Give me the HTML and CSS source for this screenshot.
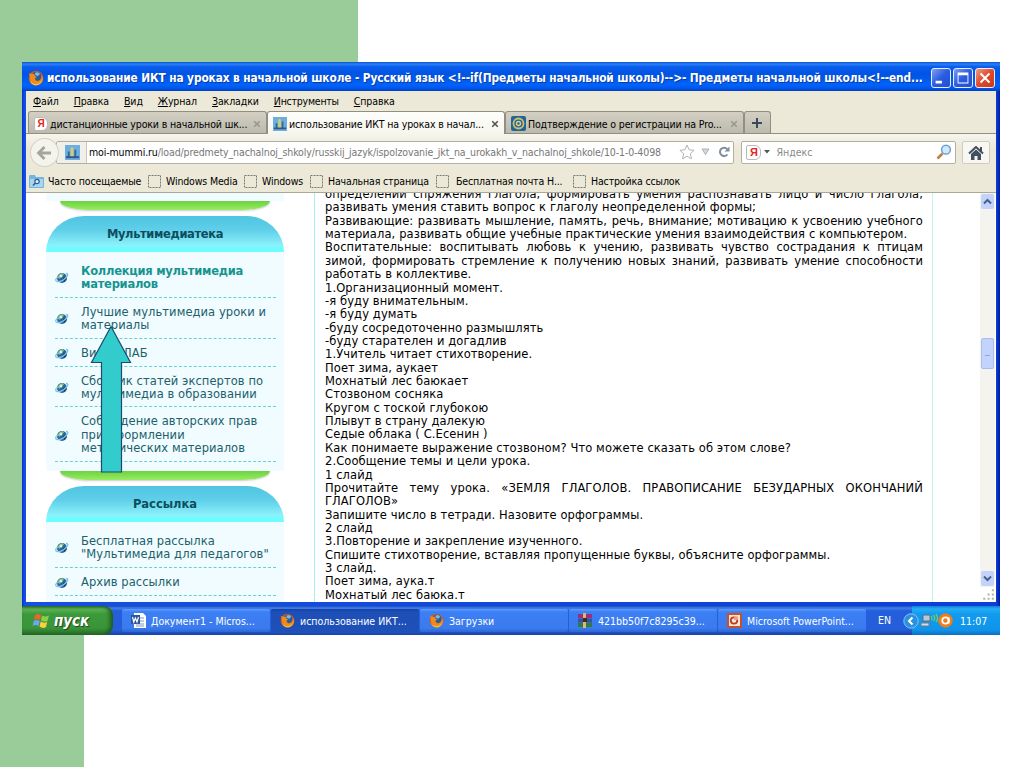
FILE: index.html
```html
<!DOCTYPE html>
<html lang="ru">
  <head>
    <meta charset="utf-8"/>
    <title>Мультимедиатека</title>
    <link rel="stylesheet" href="styles.css">
  </head>

  <body>
    <svg class="symbols" width="0" height="0">
      <symbol id="firefox" viewBox="0 0 16 16">
        <circle cx="8" cy="8" r="7.3" fill="#d9590c"/>
        <circle cx="8.6" cy="6.6" r="4.9" fill="#2b5c9e"/>
        <path d="M7 3q3-2 5 1l-2 2-3-1z" fill="#7db8e2"/>
        <path d="M1 3l2 1 3 0 1 2 2 1-2 1q0 3 3 3 4-1 3.500-6 3 4 0 8-4 3-8 1-4-3-3.500-7z" fill="#f08a1b"/>
        <path d="M1.300 9q2 5 7 5 4-.500 5.500-4-1 5-6 5.500-5-.500-6.500-6.500z" fill="#f8c23a"/>
      </symbol>
      <symbol id="globe" viewBox="0 0 14 14">
        <circle cx="7" cy="7" r="5" fill="#2c62a4"/>
        <path d="M3 5q2-3 5-3l1 2-3 1-1 3-2-1z" fill="#7ec36c"/>
        <path d="M8 7l3-1 .5 2-2.500 3z" fill="#153f4c"/>
        <circle cx="6" cy="5" r="1.500" fill="#d7f0f6"/>
        <path d="M3 6Q-1 9 2 10.500q5 1 10-5 2-3-1-3" fill="none" stroke="#7cc4e4" stroke-width="1.300"/>
      </symbol>
      <symbol id="mummi" viewBox="0 0 16 16">
        <rect width="16" height="16" fill="#6caee0"/>
        <path d="M3 13V7h2v6zM10 13V5h2v8z" fill="#3a6690"/>
        <path d="M6 13V3l2-1 1 2v9z" fill="#d0cf78"/>
        <path d="M1 12h14v2H1z" fill="#33558a"/>
      </symbol>
      <symbol id="cross" viewBox="0 0 8 8">
        <path d="M1.200 1.200l5.600 5.600M6.800 1.200L1.200 6.800" fill="none" stroke="currentColor" stroke-width="1.600"/>
      </symbol>
      <symbol id="blank" viewBox="0 0 14 14">
        <rect x="1.500" y="1.500" width="12" height="12" fill="none" stroke="#77756c" stroke-dasharray="2 1"/>
      </symbol>
    </svg>

    <div class="slide">
      <div class="window">
        <div class="titlebar">
          <svg class="icon16"><use href="#firefox"/></svg>
          <span class="title">использование ИКТ на уроках в начальной школе - Русский язык &lt;!--if(Предметы начальной школы)--&gt;- Предметы начальной школы&lt;!--end...</span>
          <div class="winbuttons">
            <svg class="winbtn blue" viewBox="0 0 20 20"><path d="M4 13h7v3H4z" fill="#fff"/></svg>
            <svg class="winbtn blue" viewBox="0 0 20 20"><path d="M4 4h12v12H4zM5 7h10v8H5z" fill="#fff" fill-rule="evenodd"/></svg>
            <svg class="winbtn red" viewBox="0 0 20 20"><path d="M5 5l10 10M15 5L5 15" stroke="#fff" stroke-width="2.200"/></svg>
          </div>
        </div>

        <div class="menubar">
          <span><u>Ф</u>айл</span>
          <span><u>П</u>равка</span>
          <span><u>В</u>ид</span>
          <span><u>Ж</u>урнал</span>
          <span><u>З</u>акладки</span>
          <span class="tools"><u>И</u>нструменты</span>
          <span><u>С</u>правка</span>
        </div>

        <div class="tabs">
          <div class="tab">
            <span class="yandex">Я</span>
            <span class="label">дистанционные уроки в начальной шк...</span>
            <svg class="close"><use href="#cross"/></svg>
          </div>
          <div class="tab active">
            <svg class="icon14"><use href="#mummi"/></svg>
            <span class="label">использование ИКТ на уроках в начал...</span>
            <svg class="close"><use href="#cross"/></svg>
          </div>
          <div class="tab">
            <svg class="icon15" viewBox="0 0 15 15"><rect width="15" height="15" rx="2" fill="#1f6699"/><circle cx="7.500" cy="7.500" r="5" fill="none" stroke="#d3bd68" stroke-width="1.800"/><circle cx="7.500" cy="7.500" r="2" fill="none" stroke="#e6d286" stroke-width="1.300"/></svg>
            <span class="label">Подтверждение о регистрации на Pro...</span>
            <svg class="close"><use href="#cross"/></svg>
          </div>
          <div class="tab plus">
            <svg class="icon10" viewBox="0 0 10 10"><path d="M5 0v10M0 5h10" stroke="#3b4a5a" stroke-width="2"/></svg>
          </div>
        </div>

        <div class="navbar">
          <div class="back">
            <svg width="16" height="16" viewBox="0 0 16 16"><path d="M8.500 2L2.500 8l6 6M3 8h12" fill="none" stroke="#a5a49d" stroke-width="2.800"/></svg>
          </div>
          <div class="urlbar">
            <div class="identity"><svg class="icon15"><use href="#mummi"/></svg></div>
            <span class="url"><b>moi-mummi.ru</b>/load/predmety_nachalnoj_shkoly/russkij_jazyk/ispolzovanie_jkt_na_urokakh_v_nachalnoj_shkole/10-1-0-4098</span>
            <svg class="star" viewBox="0 0 16 16"><path d="M8 1l2.100 4.800 5 .500-3.800 3.400 1.200 5.100L8 12.200l-4.500 2.600 1.200-5.100L.900 6.300l5-.500z" fill="#fff" stroke="#b4b4b4"/></svg>
            <svg class="drop" viewBox="0 0 9 8"><path d="M1 1h7L4.500 6.500z" fill="#d5dadf" stroke="#a9afb8"/></svg>
            <svg class="reload" viewBox="0 0 12 12"><path d="M9.500 8.500A4.200 4.200 0 1 1 9.200 3" fill="none" stroke="#7f8d9e" stroke-width="2"/><path d="M11.500 .500v5h-5z" fill="#7f8d9e"/></svg>
          </div>
          <div class="search">
            <span class="yandex big">Я</span>
            <svg class="caret" viewBox="0 0 6 4"><path d="M0 0h6L3 3.500z" fill="#555"/></svg>
            <span class="hint">Яндекс</span>
            <svg class="lens" viewBox="0 0 16 16"><path d="M1.500 14.500l5-5" stroke="#c08040" stroke-width="2.600"/><circle cx="10" cy="5.700" r="4.400" fill="#cfe8fa" stroke="#6c9fd2" stroke-width="1.500"/></svg>
          </div>
          <div class="home">
            <svg width="16" height="14" viewBox="0 0 16 14"><path d="M1 7.500L8 1l7 6.500" fill="none" stroke="#43505f" stroke-width="2"/><path d="M3 8l5-4.500L13 8v6H9.500v-4h-3v4H3z" fill="#43505f"/><path d="M12 1h2v4h-2z" fill="#43505f"/></svg>
          </div>
        </div>

        <div class="bookmarks">
          <svg class="folder" viewBox="0 0 15 14"><path d="M0 2q0-1 1-1h5l1 2h7q1 0 1 1v9q0 1-1 1H1q-1 0-1-1z" fill="#76b4dd"/><path d="M1 5h13v8H1z" fill="#a8d5f0"/><circle cx="8" cy="7.500" r="2.200" fill="#e4f3fb" stroke="#285e98" stroke-width="1.200"/><path d="M6.500 9L4 11.500" stroke="#285e98" stroke-width="1.600"/></svg>
          <span class="w1">Часто посещаемые</span>
          <svg class="icon14"><use href="#blank"/></svg>
          <span class="w2">Windows Media</span>
          <svg class="icon14"><use href="#blank"/></svg>
          <span class="w3">Windows</span>
          <svg class="icon14"><use href="#blank"/></svg>
          <span class="w4">Начальная страница</span>
          <svg class="icon14"><use href="#blank"/></svg>
          <span class="w5">Бесплатная почта Н...</span>
          <svg class="icon14"><use href="#blank"/></svg>
          <span class="w6">Настройка ссылок</span>
        </div>

        <div class="page">
          <div class="sidebar">
            <div class="rest"></div>
            <div class="foot"></div>
            <h3 class="long">Мультимедиатека</h3>
            <ul>
              <li class="current"><svg class="icon14"><use href="#globe"/></svg><a>Коллекция мультимедиа<br>материалов</a></li>
              <li><svg class="icon14"><use href="#globe"/></svg><a>Лучшие мультимедиа уроки и<br>материалы</a></li>
              <li><svg class="icon14"><use href="#globe"/></svg><a>Видео-ЛАБ</a></li>
              <li><svg class="icon14"><use href="#globe"/></svg><a>Сборник статей экспертов по<br>мультимедиа в образовании</a></li>
              <li><svg class="icon14"><use href="#globe"/></svg><a>Соблюдение авторских прав<br>при оформлении<br>методических материалов</a></li>
            </ul>
            <div class="foot"></div>
            <h3>Рассылка</h3>
            <ul class="last">
              <li><svg class="icon14"><use href="#globe"/></svg><a>Бесплатная рассылка<br>"Мультимедиа для педагогов"</a></li>
              <li><svg class="icon14"><use href="#globe"/></svg><a>Архив рассылки</a></li>
            </ul>
          </div>

          <div class="article">
            <p class="full">определении спряжения глагола, формировать умения распознавать лицо и число глагола,</p>
            <p>развивать умения ставить вопрос к глаголу неопределенной формы;</p>
            <p class="full">Развивающие: развивать мышление, память, речь, внимание; мотивацию к усвоению учебного</p>
            <p>материала, развивать общие учебные практические умения взаимодействия с компьютером.</p>
            <p class="full">Воспитательные: воспитывать любовь к учению, развивать чувство сострадания к птицам</p>
            <p class="full">зимой, формировать стремление к получению новых знаний, развивать умение способности</p>
            <p>работать в коллективе.</p>
            <p>1.Организационный момент.</p>
            <p>-я буду внимательным.</p>
            <p>-я буду думать</p>
            <p>-буду сосредоточенно размышлять</p>
            <p>-буду старателен и догадлив</p>
            <p>1.Учитель читает стихотворение.</p>
            <p>Поет зима, аукает</p>
            <p>Мохнатый лес баюкает</p>
            <p>Стозвоном сосняка</p>
            <p>Кругом с тоской глубокою</p>
            <p>Плывут в страну далекую</p>
            <p>Седые облака ( С.Есенин )</p>
            <p>Как понимаете выражение стозвоном? Что можете сказать об этом слове?</p>
            <p>2.Сообщение темы и цели урока.</p>
            <p>1 слайд</p>
            <p class="full">Прочитайте тему урока. «ЗЕМЛЯ ГЛАГОЛОВ. ПРАВОПИСАНИЕ БЕЗУДАРНЫХ ОКОНЧАНИЙ</p>
            <p>ГЛАГОЛОВ»</p>
            <p>Запишите число в тетради. Назовите орфограммы.</p>
            <p>2 слайд</p>
            <p>3.Повторение и закрепление изученного.</p>
            <p>Спишите стихотворение, вставляя пропущенные буквы, объясните орфограммы.</p>
            <p>3 слайд.</p>
            <p>Поет зима, аука.т</p>
            <p>Мохнатый лес баюка.т</p>
          </div>

          <div class="scrollbar">
            <svg class="arrowbtn" viewBox="0 0 13 14"><path d="M3 9l3.500-3.500L10 9" fill="none" stroke="#4a6186" stroke-width="2"/></svg>
            <div class="track"><div class="thumb"></div></div>
            <svg class="arrowbtn" viewBox="0 0 13 14"><path d="M3 5l3.500 3.500L10 5" fill="none" stroke="#4a6186" stroke-width="2"/></svg>
            <svg class="grip" viewBox="0 0 14 14"><path d="M11 2h2v2h-2zM7 6h2v2H7zM11 6h2v2h-2zM3 10h2v2H3zM7 10h2v2H7zM11 10h2v2h-2z" fill="#b9b5a4"/></svg>
          </div>
        </div>
      </div>

      <div class="taskbar">
        <div class="start">
          <svg width="18" height="18" viewBox="0 0 18 18"><path d="M3 3q3-2 6 0L8 8Q5 6 2 8z" fill="#f0622c"/><path d="M10 3.500q3 2 7 0L15.500 9q-3 1.500-6.500-.500z" fill="#8ccf47"/><path d="M1.700 9q3-2 6 0l-1.200 5q-3-2-6 0z" fill="#6ea5f2"/><path d="M8.700 9.500q3 2 6.500.500L14 15q-3 2-6.500-.500z" fill="#fbd03c"/></svg>
          <span>пуск</span>
        </div>
        <div class="task">
          <svg class="icon15" viewBox="0 0 15 15"><path d="M3 0h9l3 3v12H3z" fill="#fff"/><path d="M5 5h8M5 8h8M5 11h8M5 13h8" stroke="#7d9bc9"/><path d="M0 2h9v9H0z" fill="#2b579a"/><path d="M1.500 4l1.300 5 1.600-4 1.600 4L7.500 4" fill="none" stroke="#fff" stroke-width="1.200"/></svg>
          <span>Документ1 - Micros...</span>
        </div>
        <div class="task pressed">
          <svg class="icon15"><use href="#firefox"/></svg>
          <span>использование ИКТ...</span>
        </div>
        <div class="task">
          <svg class="icon15"><use href="#firefox"/></svg>
          <span>Загрузки</span>
        </div>
        <div class="task">
          <svg class="icon15" viewBox="0 0 15 15"><path d="M0 1h14v4H0z" fill="#9a2f7c"/><path d="M0 5.500h14v4H0z" fill="#36539c"/><path d="M0 10h14v4H0z" fill="#2e7d3c"/><path d="M5 0h3v15H5z" fill="#d9b878"/><path d="M5 5h4v4H5z" fill="#402a20"/></svg>
          <span>421bb50f7c8295c39...</span>
        </div>
        <div class="task">
          <svg class="icon15" viewBox="0 0 15 15"><rect width="15" height="15" rx="1" fill="#c8502e"/><rect x="2" y="2" width="11" height="11" fill="#f9e5d9"/><circle cx="7" cy="7.500" r="3.200" fill="none" stroke="#b8401f" stroke-width="1.800"/><path d="M7 7V3.500h4V7z" fill="#e8a078"/></svg>
          <span>Microsoft PowerPoint...</span>
        </div>
        <span class="lang">EN</span>
        <div class="tray">
          <svg class="expand" viewBox="0 0 16 16"><circle cx="8" cy="8" r="7.200" fill="#2d8fe0" stroke="#7cc6f5"/><path d="M9.500 4.500L6 8l3.500 3.500" fill="none" stroke="#fff" stroke-width="2"/></svg>
          <svg class="net" viewBox="0 0 18 15"><path d="M3 2h7v6H3z" fill="#b9c7d8" stroke="#5c6f88"/><path d="M1 10h8v3H1z" fill="#d6dce4" stroke="#6c7a8c"/><path d="M11 3q2 2 0 4M13.500 2q2.500 3 0 6M16 1q3 4 0 8" fill="none" stroke="#5fd06a" stroke-width="1.300"/></svg>
          <svg class="icon15" viewBox="0 0 15 15"><circle cx="7.500" cy="7.500" r="7.200" fill="#f07d1c"/><circle cx="7.500" cy="7.500" r="3.200" fill="none" stroke="#fff" stroke-width="1.800"/><path d="M10.700 4.500v6" stroke="#fff" stroke-width="1.800"/></svg>
          <span class="clock">11:07</span>
        </div>
      </div>

      <svg class="pointer" viewBox="0 0 42 148"><path d="M21 1.500L40.500 37.500H31.500V147H11.500V37.500H1.500z" fill="#33cccc" stroke="#1d4b70" stroke-width="1.200"/></svg>
    </div>
  </body>
</html>
```
FILE: styles.css
```css
* {
  box-sizing: border-box;
}

body {
  margin: 0;
  background: #fff;
  font-family: "DejaVu Sans Condensed", "DejaVu Sans", sans-serif;
  font-size: 10.5px;
  color: #000;
}

svg {
  display: block;
  flex: none;
}

.symbols {
  position: absolute;
}

.icon16 { width: 16px; height: 16px; }
.icon15 { width: 15px; height: 15px; }
.icon14 { width: 14px; height: 14px; }
.icon10 { width: 10px; height: 10px; }

.slide {
  position: relative;
  width: 1024px;
  height: 767px;
  overflow: hidden;
  padding: 62px 24px 0 22px;
  background:
    linear-gradient(#99cc99, #99cc99) 0 0 / 358px 384px no-repeat,
    linear-gradient(#99cc99, #99cc99) 0 0 / 84px 767px no-repeat,
    #fff;
}

/* window */
.window {
  height: 544px;
  padding: 0 4px 4px 4px;
  background: linear-gradient(90deg, #0831d9, #1650e0 3px, #0c3fd8 974px, #001ea0);
  display: flex;
  flex-direction: column;
}

.titlebar {
  height: 29px;
  margin: 0 -4px;
  padding: 2px 5px 0 6px;
  display: flex;
  align-items: center;
  background: linear-gradient(#0a4fc8, #2b80f8 2px, #0a5cec 5px, #0054e3 12px, #0062fb 23px, #0058ee 26px, #0040c0);
}

.title {
  margin-left: 3px;
  flex: 1;
  color: #fff;
  font-size: 11.8px;
  font-weight: bold;
  letter-spacing: -0.115px;
  white-space: nowrap;
  text-shadow: 1px 1px 0 #0a3aa0;
}

.winbuttons {
  display: flex;
  gap: 2px;
}

.winbtn {
  width: 20px;
  height: 20px;
  border: 1px solid #e8eefc;
  border-radius: 3px;
}

.winbtn.blue { background: linear-gradient(135deg, #7ba0f4, #2a5be0 50%, #2350cf); }
.winbtn.red { background: linear-gradient(135deg, #f09a80, #e0492a 50%, #c8381a); }

.menubar {
  height: 19px;
  padding-left: 7px;
  display: flex;
  align-items: center;
  gap: 15px;
  background: #ece9d8;
  letter-spacing: -0.11px;
}

.tools {
  letter-spacing: -0.24px;
}

.tabs {
  height: 24px;
  padding: 1px 0 0 2px;
  display: flex;
  background: #ece9d8;
  border-bottom: 1px solid #918f84;
}

.tab {
  width: 239px;
  height: 22px;
  padding: 2px 5px 0 5px;
  display: flex;
  align-items: center;
  border: 1px solid #918f84;
  border-bottom: 0;
  border-radius: 3px 3px 0 0;
  background: linear-gradient(#d3d0c3, #bcb9ad);
}

.tab.active {
  width: 238px;
  height: 23px;
  margin-bottom: -1px;
  background: linear-gradient(#fdfdfa, #f6f5ee);
}

.tab.plus {
  width: 27px;
  padding: 0 0 0 7px;
}

.label {
  flex: 1;
  margin-left: 2px;
  white-space: nowrap;
  letter-spacing: -0.14px;
}

.close {
  width: 8px;
  height: 8px;
  color: #99978d;
}

.active .close {
  color: #55534c;
}

.yandex {
  width: 14px;
  height: 14px;
  border: 1px solid #b9b9b9;
  border-radius: 2px 6px 6px 2px;
  background: #fff;
  color: #e52620;
  font: bold 10px/12px "Liberation Sans", sans-serif;
  text-align: center;
}

.navbar {
  height: 34px;
  padding: 2px 6px 0 4px;
  display: flex;
  align-items: center;
  background: linear-gradient(#f6f5ee, #ece9d8 14px);
}

.back {
  width: 29px;
  height: 29px;
  padding: 6px 0 0 5px;
  border: 1px solid #d4d2c6;
  border-radius: 50%;
  background: #f4f3ec;
  z-index: 1;
}

.urlbar {
  width: 680px;
  height: 23px;
  margin-left: -3px;
  display: flex;
  align-items: center;
  border: 1px solid #b3b0a3;
  border-radius: 2px;
  background: #fff;
}

.identity {
  width: 30px;
  height: 21px;
  padding: 3px 0 0 8px;
  border-right: 1px solid #c9c7bc;
  background: #f1f0e8;
}

.url {
  width: 592px;
  padding-left: 2px;
  color: #777;
  white-space: nowrap;
  letter-spacing: -0.112px;
}

.url b {
  color: #000;
  font-weight: normal;
}

.star { width: 16px; height: 16px; }
.drop { width: 9px; height: 8px; margin-left: 6px; }
.reload { width: 12px; height: 12px; margin-left: 8px; }

.search {
  width: 215px;
  height: 23px;
  margin-left: 7px;
  padding: 0 3px 0 4px;
  display: flex;
  align-items: center;
  border: 1px solid #b3b0a3;
  border-radius: 2px;
  background: #fff;
}

.yandex.big {
  width: 15px;
  height: 15px;
  font-size: 11px;
  line-height: 13px;
}

.caret { width: 6px; height: 4px; margin-left: 3px; }

.hint {
  flex: 1;
  margin-left: 6px;
  color: #8a8a8a;
}

.lens { width: 16px; height: 16px; }

.home {
  width: 28px;
  height: 23px;
  margin-left: 6px;
  padding: 4px 0 0 5px;
  border: 1px solid #cfccbf;
  border-radius: 2px;
  background: #f8f7f2;
}

.bookmarks {
  height: 25px;
  padding: 1px 0 0 3px;
  display: flex;
  align-items: center;
  background: #ece9d8;
  border-bottom: 1px solid #aca899;
  white-space: nowrap;
  letter-spacing: -0.15px;
}

.folder { width: 15px; height: 14px; }

.w1, .w2, .w3, .w4, .w5, .w6 { margin-left: 5px; }
.w1 { width: 99px; margin-left: 4px; }
.w2 { width: 77px; }
.w3 { width: 47px; }
.w4 { width: 107px; }
.w5 { width: 116px; margin-left: 7px; }

/* page */
.page {
  height: 409px;
  display: flex;
  overflow: hidden;
  background: #fff;
}

.sidebar {
  width: 238px;
  margin-left: 20px;
  flex: none;
  font-family: "DejaVu Sans", sans-serif;
  font-size: 11.5px;
  line-height: 13.4px;
}

.rest {
  height: 8px;
  background: #f0fcff;
}

.foot {
  width: 210px;
  height: 9px;
  margin: 0 auto 6px;
  border-radius: 0 0 28px 28px / 0 0 9px 9px;
  background: linear-gradient(#6cd244, #98ec60);
  box-shadow: 0 1px 2px #ccc;
}

.sidebar h3 {
  height: 36px;
  margin: 0;
  border-radius: 38px 38px 0 0 / 36px 36px 0 0;
  background: linear-gradient(#4fc4e2, #5fcfe9 14px, #8ff2fb 30px, #70fbff 31px);
  color: #0d4d5c;
  font-size: 11.5px;
  line-height: 37px;
  text-align: center;
}

.sidebar h3.long {
  letter-spacing: -0.37px;
}

.sidebar ul {
  height: 219px;
  margin: 0;
  padding: 5px 8px 0 9px;
  list-style: none;
  background: #f0fcff;
}

.sidebar ul.last {
  height: 90px;
}

.sidebar li {
  display: flex;
  align-items: center;
  padding: 8px 0 5px;
  border-bottom: 1px dashed #6bcfd0;
  color: #21606a;
  letter-spacing: 0.07px;
  white-space: nowrap;
}

.sidebar li a {
  margin-left: 12px;
}

.sidebar li.current {
  color: #17948f;
  font-weight: bold;
  letter-spacing: -0.25px;
}

.article {
  width: 619px;
  margin-left: 30px;
  padding: 0 9px 0 10px;
  flex: none;
  border-left: 1px solid #a8f0f0;
  border-right: 1px solid #c4f4ee;
  font-family: "DejaVu Sans", sans-serif;
  font-size: 11.5px;
  line-height: 13.36px;
  letter-spacing: 0.1px;
}

.article p {
  margin: 0;
  white-space: nowrap;
}

.article p:first-child {
  margin-top: -5px;
}

.article p.full {
  text-align-last: justify;
}

.scrollbar {
  width: 15px;
  margin-left: 47px;
  display: flex;
  flex-direction: column;
  background: #f4f3ee;
}

.arrowbtn {
  width: 13px;
  height: 15px;
  margin: 1px;
  border-radius: 2px;
  background: #c3d3fc;
}

.track {
  flex: 1;
  padding-top: 128px;
}

.thumb {
  width: 13px;
  height: 31px;
  margin-left: 1px;
  border: 1px solid #a9bdf0;
  border-radius: 2px;
  background: linear-gradient(#8ca8ea, #8ca8ea) 3px 16px / 5px 1px no-repeat, #c3d3fc;
}

.grip {
  width: 15px;
  height: 15px;
  background: #fff;
}

/* taskbar */
.taskbar {
  width: 978px;
  height: 29px;
  display: flex;
  background: linear-gradient(#1c48b4, #3f7fee 2px, #245edb 5px, #245edb 24px, #1941a5);
  color: #fff;
}

.start {
  width: 91px;
  padding-left: 10px;
  margin-right: 9px;
  display: flex;
  align-items: center;
  border-radius: 0 9px 9px 0;
  background: linear-gradient(#2f7a2c, #5fb45a 3px, #3c9a3a 8px, #3a943a 22px, #276b27);
  box-shadow: inset -3px 0 4px #1e5a1e;
}

.start span {
  margin-left: 4px;
  font-size: 15px;
  font-weight: bold;
  font-style: italic;
  text-shadow: 1px 1px 1px #1c451c;
}

.task {
  width: 148px;
  height: 23px;
  margin: 3px 1px 0 0;
  padding-left: 9px;
  display: flex;
  align-items: center;
  border-radius: 2px;
  background: linear-gradient(#5f9bff, #3c7ff4 3px, #3a7bee 19px, #2f66d4);
  white-space: nowrap;
}

.task span {
  margin-left: 5px;
}

.task.pressed {
  background: linear-gradient(#163f9c, #1e4fb6 3px, #1e50b8);
}

.lang {
  width: 45px;
  padding-left: 11px;
  line-height: 29px;
}

.tray {
  flex: 1;
  display: flex;
  align-items: center;
  background: linear-gradient(#1480d8, #25aef4 3px, #129bee 8px, #0f94ea 24px, #0c6ec4);
}

.expand { width: 16px; height: 16px; margin-left: -9px; }
.net { width: 18px; height: 15px; margin-left: 1px; }
.clock { margin-left: 7px; }

.pointer {
  position: absolute;
  left: 90px;
  top: 325px;
  width: 42px;
  height: 148px;
}
```
